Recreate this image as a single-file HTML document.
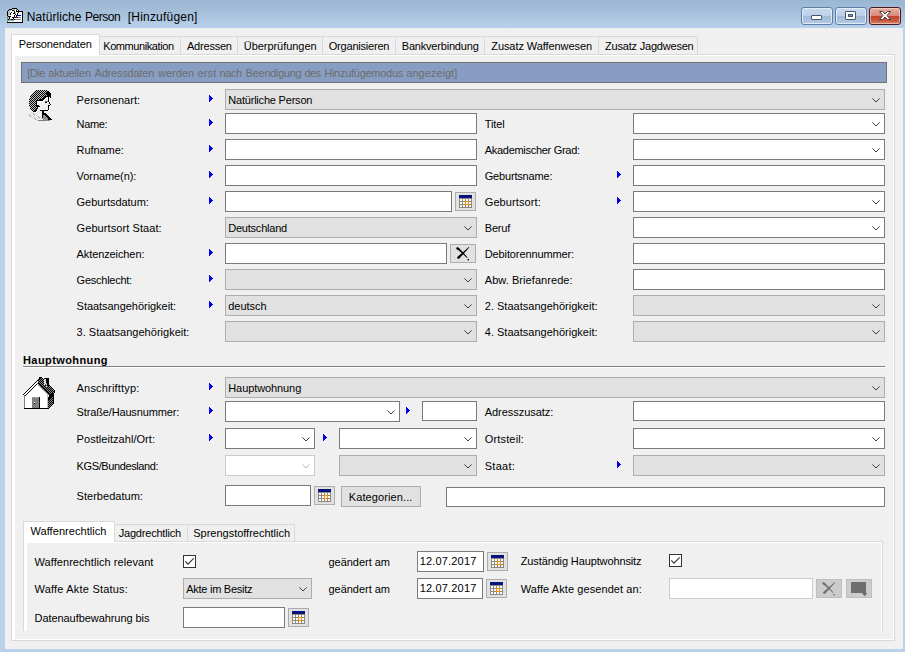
<!DOCTYPE html><html><head><meta charset="utf-8"><title>Natürliche Person [Hinzufügen]</title><style>
html,body{margin:0;padding:0;}
body{width:905px;height:652px;overflow:hidden;position:relative;background:#b9d1ea;font-family:"Liberation Sans",sans-serif;font-size:11px;color:#000;}
div,span,svg{position:absolute;box-sizing:border-box;}
.t{white-space:pre;line-height:13px;height:13px;}
.in{background:#fff;border:1px solid #7a7a7a;}
.cb{background:#fff;border:1px solid #7a7a7a;}
.cbd{background:#e1e1e1;border:1px solid #adadad;}
.cbx{background:#fff;border:1px solid #cccccc;}
.btn{background:#e1e1e1;border:1px solid #adadad;}
.btnd{background:#cccccc;border:1px solid #bfbfbf;}
.tab{background:#f0f0f0;border:1px solid #d9d9d9;border-bottom:none;}
.tabsel{background:#fff;border:1px solid #d9d9d9;border-bottom:none;}
</style></head><body>
<div style="left:0;top:0;width:905px;height:30px;background:linear-gradient(to bottom,#9ab5d2 0px,#a8c1dc 14px,#b8d0e9 27px,#b9d1ea 28px);"></div>
<div style="left:0;top:28px;width:905px;height:624px;background:#b9d1ea;"></div>
<div style="left:5px;top:28px;width:898px;height:621px;background:#f0f0f0;"></div>
<svg style="left:7px;top:8px" width="16" height="16" viewBox="0 0 16 16" shape-rendering="crispEdges"><path fill="#000000" d="M5 0h5v1h-5zM2 1h3v1h-3zM10 1h1v1h-1zM1 2h1v1h-1zM5 2h2v1h-2zM9 2h1v1h-1zM11 2h1v1h-1zM0 3h1v1h-1zM7 3h1v1h-1zM9 3h7v1h-7zM0 4h1v1h-1zM4 4h1v1h-1zM7 4h1v1h-1zM11 4h1v1h-1zM15 4h1v1h-1zM0 5h1v1h-1zM3 5h1v1h-1zM6 5h2v1h-2zM10 5h1v1h-1zM15 5h1v1h-1zM0 6h1v1h-1zM3 6h1v1h-1zM8 6h1v1h-1zM10 6h1v1h-1zM15 6h1v1h-1zM0 7h1v1h-1zM7 7h1v1h-1zM9 7h1v1h-1zM15 7h1v1h-1zM1 8h3v1h-3zM7 8h1v1h-1zM9 8h1v1h-1zM15 8h1v1h-1zM2 9h1v1h-1zM5 9h2v1h-2zM8 9h1v1h-1zM10 9h1v1h-1zM15 9h1v1h-1zM2 10h1v1h-1zM6 10h1v1h-1zM15 10h1v1h-1zM1 11h1v1h-1zM4 11h2v1h-2zM7 11h1v1h-1zM15 11h1v1h-1zM15 12h1v1h-1zM15 13h1v1h-1zM0 14h16v1h-16z"/><path fill="#c0c0c0" d="M5 1h3v1h-3zM9 1h1v1h-1zM2 2h2v1h-2zM7 2h1v1h-1zM1 3h2v1h-2zM1 4h2v1h-2zM8 4h1v1h-1zM1 5h2v1h-2zM8 5h1v1h-1zM1 6h2v1h-2zM1 7h1v1h-1zM1 9h1v1h-1zM1 10h1v1h-1z"/><path fill="#ffffff" d="M8 1h1v1h-1zM4 2h1v1h-1zM8 2h1v1h-1zM10 2h1v1h-1zM3 3h4v1h-4zM8 3h1v1h-1zM3 4h1v1h-1zM5 4h2v1h-2zM9 4h2v1h-2zM12 4h3v1h-3zM4 5h2v1h-2zM9 5h1v1h-1zM11 5h4v1h-4zM4 6h4v1h-4zM9 6h1v1h-1zM11 6h4v1h-4zM2 7h5v1h-5zM8 7h1v1h-1zM14 7h1v1h-1zM4 8h3v1h-3zM8 8h1v1h-1zM10 8h5v1h-5zM3 9h2v1h-2zM14 9h1v1h-1zM3 10h3v1h-3zM7 10h8v1h-8zM14 11h1v1h-1zM7 12h8v1h-8zM1 13h14v1h-14z"/><path fill="#0000a0" d="M10 7h4v1h-4z"/><path fill="#808080" d="M0 8h1v1h-1zM0 9h1v1h-1zM11 9h3v1h-3zM0 10h1v1h-1zM0 11h1v1h-1zM8 11h6v1h-6zM0 12h1v1h-1zM0 13h1v1h-1z"/><path fill="#c000c0" d="M7 9h1v1h-1zM9 9h1v1h-1z"/><path fill="#00a0a0" d="M2 11h2v1h-2zM6 11h1v1h-1z"/><path fill="#a8a8a8" d="M1 12h6v1h-6z"/></svg>
<span class="t" style="left:26.75px;top:10px;letter-spacing:0.083px;font-size:12px;line-height:15px;height:15px;">Natürliche </span>
<span class="t" style="left:84.90px;top:10px;letter-spacing:-0.450px;font-size:12px;line-height:15px;height:15px;">Person  </span>
<span class="t" style="left:127.75px;top:10px;letter-spacing:0.205px;font-size:12px;line-height:15px;height:15px;">[Hinzufügen]</span>
<div style="left:801px;top:7px;width:32px;height:18px;border:1px solid #5d7ea6;border-radius:3px;background:linear-gradient(to bottom,#c6d9ee 0%,#bcd1e9 48%,#a2bbd8 50%,#a9c2de 80%,#b9d0ea 100%);box-shadow:inset 0 0 0 1px rgba(236,244,252,.75);"></div>
<div style="left:835px;top:7px;width:32px;height:18px;border:1px solid #5d7ea6;border-radius:3px;background:linear-gradient(to bottom,#c6d9ee 0%,#bcd1e9 48%,#a2bbd8 50%,#a9c2de 80%,#b9d0ea 100%);box-shadow:inset 0 0 0 1px rgba(236,244,252,.75);"></div>
<div style="left:869px;top:7px;width:32px;height:18px;border:1px solid #4e1820;border-radius:3px;background:linear-gradient(to bottom,#e7b0a5 0%,#d98879 48%,#c1432a 50%,#c85a41 80%,#d88a6e 100%);box-shadow:inset 0 0 0 1px rgba(255,225,215,.55);"></div>
<div style="left:811px;top:15px;width:11px;height:5px;background:#fff;border:1px solid #4a5568;border-radius:1px;"></div>
<div style="left:845px;top:11px;width:11px;height:9px;background:#fff;border:1px solid #4a5568;border-radius:1px;"></div>
<div style="left:848px;top:14px;width:5px;height:3px;background:#7b98bd;border:1px solid #4a5568;"></div>
<svg style="left:878px;top:10px" width="14" height="11" viewBox="0 0 14 11"><path d="M1.5 1.5 L4.5 1.5 L7 4 L9.5 1.5 L12.5 1.5 L9 5.5 L12.5 9.5 L9.5 9.5 L7 7 L4.5 9.5 L1.5 9.5 L5 5.5 Z" fill="#fff" stroke="#4a3a40" stroke-width="1" stroke-linejoin="round"/></svg>
<div style="left:11px;top:54px;width:884px;height:587px;background:#f0f0f0;border:1px solid #d9d9d9;box-shadow:inset 0 0 0 1px #fff,inset 3px 0 0 #fff;"></div>
<div class="tabsel" style="left:11px;top:34px;width:89px;height:21px;z-index:2;"></div>
<span class="t" style="left:18.75px;top:38px;letter-spacing:-0.125px;z-index:3;">Personendaten</span>
<div class="tab" style="left:99px;top:36px;width:82px;height:18px;"></div>
<span class="t" style="left:103.25px;top:40px;letter-spacing:-0.417px;">Kommunikation</span>
<div class="tab" style="left:180px;top:36px;width:58px;height:18px;"></div>
<span class="t" style="left:187.00px;top:40px;letter-spacing:-0.214px;">Adressen</span>
<div class="tab" style="left:237px;top:36px;width:86px;height:18px;"></div>
<span class="t" style="left:243.75px;top:40px;letter-spacing:-0.042px;">Überprüfungen</span>
<div class="tab" style="left:322px;top:36px;width:74px;height:18px;"></div>
<span class="t" style="left:328.75px;top:40px;letter-spacing:-0.205px;">Organisieren</span>
<div class="tab" style="left:395px;top:36px;width:90px;height:18px;"></div>
<span class="t" style="left:401.75px;top:40px;letter-spacing:-0.192px;">Bankverbindung</span>
<div class="tab" style="left:484px;top:36px;width:115px;height:18px;"></div>
<span class="t" style="left:491.25px;top:40px;letter-spacing:-0.074px;">Zusatz Waffenwesen</span>
<div class="tab" style="left:598px;top:36px;width:100px;height:18px;"></div>
<span class="t" style="left:605.00px;top:40px;letter-spacing:-0.200px;">Zusatz Jagdwesen</span>
<div style="left:21px;top:62px;width:866px;height:21px;background:#889dc2;border:1px solid #727272;"></div>
<span class="t" style="left:27.25px;top:67px;letter-spacing:-0.500px;color:#6d6d6d;">[Die </span>
<span class="t" style="left:48.25px;top:67px;letter-spacing:-0.156px;color:#6d6d6d;">aktuellen </span>
<span class="t" style="left:94.50px;top:67px;letter-spacing:-0.200px;color:#6d6d6d;">Adressdaten </span>
<span class="t" style="left:158.00px;top:67px;color:#6d6d6d;">werden </span>
<span class="t" style="left:197.50px;top:67px;letter-spacing:0.167px;color:#6d6d6d;">erst </span>
<span class="t" style="left:219.50px;top:67px;letter-spacing:-0.417px;color:#6d6d6d;">nach </span>
<span class="t" style="left:245.75px;top:67px;letter-spacing:-0.306px;color:#6d6d6d;">Beendigung </span>
<span class="t" style="left:304.50px;top:67px;letter-spacing:-0.600px;color:#6d6d6d;">des </span>
<span class="t" style="left:324.25px;top:67px;letter-spacing:-0.269px;color:#6d6d6d;">Hinzufügemodus </span>
<span class="t" style="left:406.25px;top:67px;letter-spacing:0.028px;color:#6d6d6d;">angezeigt]</span>
<svg style="left:23px;top:89px" width="32" height="32" viewBox="0 0 32 32" shape-rendering="crispEdges"><path fill="#000000" d="M13 1h1v1h-1zM15 1h1v1h-1zM17 1h1v1h-1zM19 1h1v1h-1zM21 1h1v1h-1zM23 1h1v1h-1zM12 2h1v1h-1zM14 2h1v1h-1zM16 2h1v1h-1zM18 2h1v1h-1zM20 2h1v1h-1zM22 2h1v1h-1zM24 2h2v1h-2zM11 3h1v1h-1zM13 3h1v1h-1zM15 3h1v1h-1zM17 3h1v1h-1zM19 3h1v1h-1zM21 3h1v1h-1zM23 3h4v1h-4zM10 4h1v1h-1zM12 4h1v1h-1zM14 4h1v1h-1zM16 4h1v1h-1zM18 4h1v1h-1zM20 4h1v1h-1zM22 4h6v1h-6zM9 5h1v1h-1zM11 5h1v1h-1zM13 5h1v1h-1zM15 5h1v1h-1zM17 5h1v1h-1zM19 5h1v1h-1zM21 5h1v1h-1zM23 5h5v1h-5zM8 6h1v1h-1zM10 6h1v1h-1zM12 6h1v1h-1zM14 6h1v1h-1zM16 6h1v1h-1zM18 6h1v1h-1zM20 6h1v1h-1zM22 6h1v1h-1zM24 6h4v1h-4zM7 7h1v1h-1zM9 7h1v1h-1zM11 7h1v1h-1zM13 7h1v1h-1zM15 7h1v1h-1zM17 7h1v1h-1zM19 7h1v1h-1zM21 7h7v1h-7zM8 8h1v1h-1zM10 8h1v1h-1zM12 8h1v1h-1zM14 8h1v1h-1zM16 8h1v1h-1zM18 8h1v1h-1zM20 8h3v1h-3zM25 8h1v1h-1zM27 8h1v1h-1zM7 9h1v1h-1zM9 9h1v1h-1zM11 9h1v1h-1zM13 9h1v1h-1zM15 9h1v1h-1zM17 9h1v1h-1zM19 9h3v1h-3zM25 9h1v1h-1zM6 10h1v1h-1zM8 10h1v1h-1zM10 10h1v1h-1zM12 10h1v1h-1zM14 10h1v1h-1zM16 10h5v1h-5zM25 10h1v1h-1zM7 11h1v1h-1zM9 11h1v1h-1zM11 11h1v1h-1zM13 11h7v1h-7zM25 11h1v1h-1zM6 12h1v1h-1zM8 12h1v1h-1zM10 12h1v1h-1zM12 12h2v1h-2zM25 12h1v1h-1zM7 13h1v1h-1zM9 13h1v1h-1zM11 13h1v1h-1zM13 13h1v1h-1zM22 13h2v1h-2zM26 13h1v1h-1zM6 14h1v1h-1zM8 14h1v1h-1zM10 14h1v1h-1zM12 14h2v1h-2zM26 14h1v1h-1zM7 15h1v1h-1zM9 15h1v1h-1zM11 15h1v1h-1zM13 15h1v1h-1zM27 15h1v1h-1zM6 16h1v1h-1zM8 16h1v1h-1zM10 16h1v1h-1zM12 16h4v1h-4zM25 16h2v1h-2zM7 17h1v1h-1zM9 17h1v1h-1zM11 17h1v1h-1zM13 17h4v1h-4zM25 17h1v1h-1zM8 18h1v1h-1zM10 18h1v1h-1zM12 18h1v1h-1zM14 18h1v1h-1zM25 18h1v1h-1zM7 19h1v1h-1zM9 19h1v1h-1zM11 19h1v1h-1zM13 19h2v1h-2zM25 19h1v1h-1zM8 20h1v1h-1zM10 20h1v1h-1zM12 20h2v1h-2zM25 20h1v1h-1zM9 21h1v1h-1zM11 21h3v1h-3zM17 21h8v1h-8zM10 22h3v1h-3zM19 22h2v1h-2zM19 23h2v1h-2zM19 24h4v1h-4zM19 25h5v1h-5zM19 26h1v1h-1zM22 26h3v1h-3zM19 27h1v1h-1zM23 27h3v1h-3zM19 28h1v1h-1zM24 28h3v1h-3zM25 29h3v1h-3zM25 30h4v1h-4z"/><path fill="#c0c0c0" d="M14 1h1v1h-1zM16 1h1v1h-1zM18 1h1v1h-1zM20 1h1v1h-1zM22 1h1v1h-1zM11 2h1v1h-1zM13 2h1v1h-1zM15 2h1v1h-1zM17 2h1v1h-1zM19 2h1v1h-1zM21 2h1v1h-1zM23 2h1v1h-1zM10 3h1v1h-1zM12 3h1v1h-1zM14 3h1v1h-1zM16 3h1v1h-1zM18 3h1v1h-1zM20 3h1v1h-1zM22 3h1v1h-1zM9 4h1v1h-1zM11 4h1v1h-1zM13 4h1v1h-1zM15 4h1v1h-1zM17 4h1v1h-1zM19 4h1v1h-1zM21 4h1v1h-1zM8 5h1v1h-1zM10 5h1v1h-1zM12 5h1v1h-1zM14 5h1v1h-1zM16 5h1v1h-1zM18 5h1v1h-1zM20 5h1v1h-1zM22 5h1v1h-1zM9 6h1v1h-1zM11 6h1v1h-1zM13 6h1v1h-1zM15 6h1v1h-1zM17 6h1v1h-1zM19 6h1v1h-1zM21 6h1v1h-1zM23 6h1v1h-1zM8 7h1v1h-1zM10 7h1v1h-1zM12 7h1v1h-1zM14 7h1v1h-1zM16 7h1v1h-1zM18 7h1v1h-1zM20 7h1v1h-1zM7 8h1v1h-1zM9 8h1v1h-1zM11 8h1v1h-1zM13 8h1v1h-1zM15 8h1v1h-1zM17 8h1v1h-1zM19 8h1v1h-1zM6 9h1v1h-1zM8 9h1v1h-1zM10 9h1v1h-1zM12 9h1v1h-1zM14 9h1v1h-1zM16 9h1v1h-1zM18 9h1v1h-1zM7 10h1v1h-1zM9 10h1v1h-1zM11 10h1v1h-1zM13 10h1v1h-1zM15 10h1v1h-1zM6 11h1v1h-1zM8 11h1v1h-1zM10 11h1v1h-1zM12 11h1v1h-1zM7 12h1v1h-1zM9 12h1v1h-1zM11 12h1v1h-1zM6 13h1v1h-1zM8 13h1v1h-1zM10 13h1v1h-1zM12 13h1v1h-1zM7 14h1v1h-1zM9 14h1v1h-1zM11 14h1v1h-1zM6 15h1v1h-1zM8 15h1v1h-1zM10 15h1v1h-1zM12 15h1v1h-1zM7 16h1v1h-1zM9 16h1v1h-1zM11 16h1v1h-1zM6 17h1v1h-1zM8 17h1v1h-1zM10 17h1v1h-1zM12 17h1v1h-1zM7 18h1v1h-1zM9 18h1v1h-1zM11 18h1v1h-1zM13 18h1v1h-1zM8 19h1v1h-1zM10 19h1v1h-1zM12 19h1v1h-1zM9 20h1v1h-1zM11 20h1v1h-1zM10 21h1v1h-1z"/><path fill="#ffffff" d="M23 8h2v1h-2zM26 8h1v1h-1zM22 9h3v1h-3zM26 9h1v1h-1zM21 10h2v1h-2zM26 10h1v1h-1zM20 11h2v1h-2zM26 11h1v1h-1zM14 12h6v1h-6zM26 12h1v1h-1zM14 13h2v1h-2zM14 14h1v1h-1zM14 15h1v1h-1zM27 16h1v1h-1zM26 17h2v1h-2zM15 18h2v1h-2zM26 18h1v1h-1zM15 19h1v1h-1zM26 19h1v1h-1zM14 20h1v1h-1zM26 20h1v1h-1zM8 24h1v1h-1zM7 25h1v1h-1zM9 25h1v1h-1zM8 26h1v1h-1zM10 26h1v1h-1zM12 26h1v1h-1zM9 27h1v1h-1zM11 27h1v1h-1zM13 27h1v1h-1zM10 28h1v1h-1zM12 28h1v1h-1zM14 28h1v1h-1zM13 29h1v1h-1zM15 29h1v1h-1zM17 29h1v1h-1zM14 30h1v1h-1zM16 30h1v1h-1z"/><path fill="#606060" d="M22 12h2v1h-2z"/><path fill="#808080" d="M24 12h1v1h-1zM20 26h1v1h-1zM21 27h1v1h-1zM20 28h1v1h-1zM22 28h1v1h-1zM21 29h1v1h-1zM23 29h1v1h-1zM20 30h1v1h-1zM22 30h1v1h-1zM24 30h1v1h-1zM15 31h9v1h-9zM25 31h1v1h-1z"/><path fill="#d0d0d0" d="M8 23h1v1h-1zM7 24h1v1h-1zM9 24h1v1h-1zM6 25h1v1h-1zM8 25h1v1h-1zM10 25h1v1h-1zM12 25h1v1h-1zM5 26h1v1h-1zM7 26h1v1h-1zM9 26h1v1h-1zM11 26h1v1h-1zM13 26h1v1h-1zM8 27h1v1h-1zM10 27h1v1h-1zM12 27h1v1h-1zM14 27h1v1h-1zM9 28h1v1h-1zM11 28h1v1h-1zM13 28h1v1h-1zM15 28h1v1h-1zM17 28h1v1h-1zM10 29h1v1h-1zM12 29h1v1h-1zM14 29h1v1h-1zM16 29h1v1h-1zM18 29h1v1h-1zM13 30h1v1h-1zM15 30h1v1h-1zM17 30h1v1h-1zM14 31h1v1h-1z"/><path fill="#a8a8a8" d="M10 24h1v1h-1zM11 25h1v1h-1zM6 26h1v1h-1zM7 27h1v1h-1zM15 27h1v1h-1zM16 28h1v1h-1zM11 29h1v1h-1zM19 29h1v1h-1zM12 30h1v1h-1z"/><path fill="#a0a0a0" d="M21 26h1v1h-1zM20 27h1v1h-1zM22 27h1v1h-1zM21 28h1v1h-1zM23 28h1v1h-1zM20 29h1v1h-1zM22 29h1v1h-1zM24 29h1v1h-1zM21 30h1v1h-1zM23 30h1v1h-1zM24 31h1v1h-1zM26 31h1v1h-1z"/></svg>
<svg style="left:23px;top:377px" width="32" height="32" viewBox="0 0 32 32" shape-rendering="crispEdges"><path fill="#000000" d="M16 0h3v1h-3zM16 1h2v1h-2zM19 1h1v1h-1zM21 1h5v1h-5zM15 2h2v1h-2zM18 2h1v1h-1zM20 2h1v1h-1zM23 2h3v1h-3zM14 3h2v1h-2zM17 3h1v1h-1zM19 3h1v1h-1zM23 3h3v1h-3zM13 4h1v1h-1zM16 4h1v1h-1zM18 4h1v1h-1zM20 4h1v1h-1zM23 4h3v1h-3zM12 5h1v1h-1zM15 5h1v1h-1zM17 5h1v1h-1zM19 5h1v1h-1zM23 5h3v1h-3zM11 6h1v1h-1zM15 6h2v1h-2zM18 6h1v1h-1zM20 6h1v1h-1zM24 6h2v1h-2zM10 7h1v1h-1zM13 7h1v1h-1zM16 7h2v1h-2zM19 7h1v1h-1zM24 7h2v1h-2zM9 8h1v1h-1zM12 8h1v1h-1zM17 8h2v1h-2zM20 8h1v1h-1zM22 8h1v1h-1zM24 8h3v1h-3zM8 9h1v1h-1zM11 9h1v1h-1zM18 9h2v1h-2zM21 9h1v1h-1zM25 9h1v1h-1zM27 9h1v1h-1zM7 10h1v1h-1zM10 10h1v1h-1zM19 10h2v1h-2zM22 10h1v1h-1zM24 10h1v1h-1zM26 10h1v1h-1zM28 10h1v1h-1zM6 11h1v1h-1zM9 11h1v1h-1zM20 11h2v1h-2zM23 11h1v1h-1zM25 11h1v1h-1zM27 11h1v1h-1zM29 11h1v1h-1zM5 12h1v1h-1zM8 12h1v1h-1zM21 12h2v1h-2zM24 12h1v1h-1zM26 12h1v1h-1zM28 12h1v1h-1zM30 12h1v1h-1zM4 13h1v1h-1zM7 13h1v1h-1zM22 13h2v1h-2zM25 13h1v1h-1zM27 13h1v1h-1zM29 13h1v1h-1zM31 13h1v1h-1zM3 14h1v1h-1zM6 14h1v1h-1zM23 14h2v1h-2zM26 14h1v1h-1zM28 14h1v1h-1zM30 14h2v1h-2zM2 15h1v1h-1zM5 15h1v1h-1zM24 15h2v1h-2zM27 15h1v1h-1zM29 15h1v1h-1zM31 15h1v1h-1zM1 16h1v1h-1zM4 16h1v1h-1zM25 16h2v1h-2zM28 16h3v1h-3zM0 17h1v1h-1zM3 17h1v1h-1zM26 17h5v1h-5zM2 18h1v1h-1zM26 18h5v1h-5zM26 19h5v1h-5zM16 20h1v1h-1zM25 20h4v1h-4zM30 20h1v1h-1zM16 21h1v1h-1zM25 21h3v1h-3zM29 21h2v1h-2zM16 22h1v1h-1zM25 22h2v1h-2zM28 22h1v1h-1zM30 22h1v1h-1zM16 23h1v1h-1zM25 23h1v1h-1zM27 23h1v1h-1zM29 23h2v1h-2zM16 24h1v1h-1zM26 24h1v1h-1zM28 24h1v1h-1zM30 24h1v1h-1zM16 25h1v1h-1zM25 25h1v1h-1zM27 25h1v1h-1zM29 25h2v1h-2zM11 26h1v1h-1zM16 26h1v1h-1zM26 26h1v1h-1zM28 26h1v1h-1zM30 26h1v1h-1zM16 27h1v1h-1zM25 27h1v1h-1zM27 27h1v1h-1zM29 27h1v1h-1zM16 28h1v1h-1zM26 28h1v1h-1zM28 28h1v1h-1zM16 29h1v1h-1zM25 29h1v1h-1zM27 29h1v1h-1zM16 30h1v1h-1zM26 30h1v1h-1zM1 31h25v1h-25z"/><path fill="#808080" d="M18 1h1v1h-1zM17 2h1v1h-1zM19 2h1v1h-1zM16 3h1v1h-1zM18 3h1v1h-1zM20 3h1v1h-1zM15 4h1v1h-1zM17 4h1v1h-1zM19 4h1v1h-1zM16 5h1v1h-1zM18 5h1v1h-1zM20 5h1v1h-1zM14 6h1v1h-1zM17 6h1v1h-1zM19 6h1v1h-1zM23 6h1v1h-1zM15 7h1v1h-1zM18 7h1v1h-1zM20 7h1v1h-1zM22 7h1v1h-1zM16 8h1v1h-1zM19 8h1v1h-1zM21 8h1v1h-1zM23 8h1v1h-1zM17 9h1v1h-1zM20 9h1v1h-1zM22 9h1v1h-1zM24 9h1v1h-1zM26 9h1v1h-1zM18 10h1v1h-1zM21 10h1v1h-1zM23 10h1v1h-1zM25 10h1v1h-1zM27 10h1v1h-1zM19 11h1v1h-1zM22 11h1v1h-1zM24 11h1v1h-1zM26 11h1v1h-1zM28 11h1v1h-1zM20 12h1v1h-1zM23 12h1v1h-1zM25 12h1v1h-1zM27 12h1v1h-1zM29 12h1v1h-1zM21 13h1v1h-1zM24 13h1v1h-1zM26 13h1v1h-1zM28 13h1v1h-1zM30 13h1v1h-1zM22 14h1v1h-1zM25 14h1v1h-1zM27 14h1v1h-1zM29 14h1v1h-1zM23 15h1v1h-1zM26 15h1v1h-1zM28 15h1v1h-1zM30 15h1v1h-1zM24 16h1v1h-1zM27 16h1v1h-1zM25 17h1v1h-1zM1 18h1v1h-1zM1 19h1v1h-1zM1 20h1v1h-1zM29 20h1v1h-1zM1 21h1v1h-1zM9 21h7v1h-7zM28 21h1v1h-1zM1 22h1v1h-1zM9 22h7v1h-7zM27 22h1v1h-1zM29 22h1v1h-1zM1 23h1v1h-1zM9 23h7v1h-7zM26 23h1v1h-1zM28 23h1v1h-1zM1 24h1v1h-1zM9 24h7v1h-7zM25 24h1v1h-1zM27 24h1v1h-1zM29 24h1v1h-1zM1 25h1v1h-1zM9 25h2v1h-2zM12 25h4v1h-4zM26 25h1v1h-1zM28 25h1v1h-1zM1 26h1v1h-1zM9 26h2v1h-2zM12 26h4v1h-4zM25 26h1v1h-1zM27 26h1v1h-1zM29 26h1v1h-1zM1 27h1v1h-1zM9 27h7v1h-7zM26 27h1v1h-1zM28 27h1v1h-1zM1 28h1v1h-1zM9 28h7v1h-7zM25 28h1v1h-1zM27 28h1v1h-1zM1 29h1v1h-1zM9 29h7v1h-7zM26 29h1v1h-1zM1 30h1v1h-1zM9 30h7v1h-7zM25 30h1v1h-1z"/><path fill="#c0c0c0" d="M21 2h1v1h-1zM22 3h1v1h-1zM21 4h1v1h-1zM22 5h1v1h-1zM21 6h1v1h-1zM23 7h1v1h-1zM15 8h1v1h-1zM16 9h1v1h-1zM23 9h1v1h-1zM17 10h1v1h-1zM18 11h1v1h-1zM19 12h1v1h-1zM20 13h1v1h-1zM21 14h1v1h-1zM22 15h1v1h-1zM23 16h1v1h-1zM24 17h1v1h-1zM24 18h1v1h-1zM24 19h1v1h-1zM24 20h1v1h-1zM24 21h1v1h-1zM24 22h1v1h-1zM24 23h1v1h-1zM24 24h1v1h-1zM24 25h1v1h-1zM24 26h1v1h-1zM24 27h1v1h-1zM24 28h1v1h-1zM24 29h1v1h-1zM24 30h1v1h-1z"/><path fill="#ffffff" d="M22 2h1v1h-1zM21 3h1v1h-1zM14 4h1v1h-1zM22 4h1v1h-1zM13 5h2v1h-2zM21 5h1v1h-1zM12 6h2v1h-2zM22 6h1v1h-1zM11 7h2v1h-2zM14 7h1v1h-1zM21 7h1v1h-1zM10 8h2v1h-2zM13 8h2v1h-2zM9 9h2v1h-2zM12 9h4v1h-4zM8 10h2v1h-2zM11 10h6v1h-6zM7 11h2v1h-2zM10 11h8v1h-8zM6 12h2v1h-2zM9 12h10v1h-10zM5 13h2v1h-2zM8 13h12v1h-12zM4 14h2v1h-2zM7 14h14v1h-14zM3 15h2v1h-2zM6 15h16v1h-16zM2 16h2v1h-2zM5 16h18v1h-18zM1 17h2v1h-2zM4 17h20v1h-20zM3 18h21v1h-21zM2 19h22v1h-22zM2 20h7v1h-7zM17 20h7v1h-7zM2 21h7v1h-7zM17 21h7v1h-7zM2 22h7v1h-7zM17 22h7v1h-7zM2 23h7v1h-7zM17 23h7v1h-7zM2 24h7v1h-7zM17 24h7v1h-7zM2 25h7v1h-7zM11 25h1v1h-1zM17 25h7v1h-7zM2 26h7v1h-7zM17 26h7v1h-7zM2 27h7v1h-7zM17 27h7v1h-7zM2 28h7v1h-7zM17 28h7v1h-7zM2 29h7v1h-7zM17 29h7v1h-7zM2 30h7v1h-7zM17 30h7v1h-7z"/><path fill="#a0a0a0" d="M9 20h7v1h-7z"/></svg>
<span class="t" style="left:76.60px;top:94px;letter-spacing:0.045px;">Personenart:</span>
<svg style="left:209px;top:95px" width="4" height="7" viewBox="0 0 4 7" shape-rendering="crispEdges"><path d="M0 0h1v1h1v1h1v1h1v1h-1v1h-1v1h-1v1h-1z" fill="#0000ee"/></svg>
<span class="t" style="left:76.60px;top:118px;letter-spacing:-0.375px;">Name:</span>
<svg style="left:209px;top:119px" width="4" height="7" viewBox="0 0 4 7" shape-rendering="crispEdges"><path d="M0 0h1v1h1v1h1v1h1v1h-1v1h-1v1h-1v1h-1z" fill="#0000ee"/></svg>
<span class="t" style="left:76.60px;top:144px;letter-spacing:-0.071px;">Rufname:</span>
<svg style="left:209px;top:145px" width="4" height="7" viewBox="0 0 4 7" shape-rendering="crispEdges"><path d="M0 0h1v1h1v1h1v1h1v1h-1v1h-1v1h-1v1h-1z" fill="#0000ee"/></svg>
<span class="t" style="left:76.60px;top:170px;letter-spacing:-0.075px;">Vorname(n):</span>
<svg style="left:209px;top:171px" width="4" height="7" viewBox="0 0 4 7" shape-rendering="crispEdges"><path d="M0 0h1v1h1v1h1v1h1v1h-1v1h-1v1h-1v1h-1z" fill="#0000ee"/></svg>
<span class="t" style="left:76.60px;top:196px;letter-spacing:-0.042px;">Geburtsdatum:</span>
<svg style="left:209px;top:197px" width="4" height="7" viewBox="0 0 4 7" shape-rendering="crispEdges"><path d="M0 0h1v1h1v1h1v1h1v1h-1v1h-1v1h-1v1h-1z" fill="#0000ee"/></svg>
<span class="t" style="left:76.60px;top:222px;letter-spacing:0.078px;">Geburtsort Staat:</span>
<span class="t" style="left:76.60px;top:248px;letter-spacing:-0.104px;">Aktenzeichen:</span>
<svg style="left:209px;top:249px" width="4" height="7" viewBox="0 0 4 7" shape-rendering="crispEdges"><path d="M0 0h1v1h1v1h1v1h1v1h-1v1h-1v1h-1v1h-1z" fill="#0000ee"/></svg>
<span class="t" style="left:76.60px;top:274px;letter-spacing:-0.250px;">Geschlecht:</span>
<svg style="left:209px;top:275px" width="4" height="7" viewBox="0 0 4 7" shape-rendering="crispEdges"><path d="M0 0h1v1h1v1h1v1h1v1h-1v1h-1v1h-1v1h-1z" fill="#0000ee"/></svg>
<span class="t" style="left:76.60px;top:300px;letter-spacing:-0.039px;">Staatsangehörigkeit:</span>
<svg style="left:209px;top:301px" width="4" height="7" viewBox="0 0 4 7" shape-rendering="crispEdges"><path d="M0 0h1v1h1v1h1v1h1v1h-1v1h-1v1h-1v1h-1z" fill="#0000ee"/></svg>
<span class="t" style="left:76.60px;top:326px;letter-spacing:0.011px;">3. Staatsangehörigkeit:</span>
<span class="t" style="left:484.75px;top:118px;letter-spacing:-0.125px;">Titel</span>
<span class="t" style="left:484.75px;top:144px;letter-spacing:-0.294px;">Akademischer Grad:</span>
<span class="t" style="left:484.75px;top:170px;letter-spacing:-0.182px;">Geburtsname:</span>
<svg style="left:617px;top:171px" width="4" height="7" viewBox="0 0 4 7" shape-rendering="crispEdges"><path d="M0 0h1v1h1v1h1v1h1v1h-1v1h-1v1h-1v1h-1z" fill="#0000ee"/></svg>
<span class="t" style="left:484.75px;top:196px;letter-spacing:0.100px;">Geburtsort:</span>
<svg style="left:617px;top:197px" width="4" height="7" viewBox="0 0 4 7" shape-rendering="crispEdges"><path d="M0 0h1v1h1v1h1v1h1v1h-1v1h-1v1h-1v1h-1z" fill="#0000ee"/></svg>
<span class="t" style="left:484.75px;top:222px;letter-spacing:-0.188px;">Beruf</span>
<span class="t" style="left:484.75px;top:248px;letter-spacing:-0.117px;">Debitorennummer:</span>
<span class="t" style="left:484.75px;top:274px;letter-spacing:0.062px;">Abw. Briefanrede:</span>
<span class="t" style="left:484.75px;top:300px;letter-spacing:0.011px;">2. Staatsangehörigkeit:</span>
<span class="t" style="left:484.75px;top:326px;letter-spacing:0.011px;">4. Staatsangehörigkeit:</span>
<div class="cbd" style="left:225px;top:89px;width:660px;height:21px;"></div>
<svg style="left:871px;top:96.5px" width="10" height="7" viewBox="0 0 10 7"><path d="M1.4 1.4 L5 5 L8.6 1.4" fill="none" stroke="#404040" stroke-width="1"/></svg>
<span class="t" style="left:228.25px;top:94px;letter-spacing:-0.203px;">Natürliche Person</span>
<div class="in" style="left:225px;top:113px;width:252px;height:21px;"></div>
<div class="cb" style="left:633px;top:113px;width:252px;height:21px;"></div>
<svg style="left:871px;top:120.5px" width="10" height="7" viewBox="0 0 10 7"><path d="M1.4 1.4 L5 5 L8.6 1.4" fill="none" stroke="#404040" stroke-width="1"/></svg>
<div class="in" style="left:225px;top:139px;width:252px;height:21px;"></div>
<div class="cb" style="left:633px;top:139px;width:252px;height:21px;"></div>
<svg style="left:871px;top:146.5px" width="10" height="7" viewBox="0 0 10 7"><path d="M1.4 1.4 L5 5 L8.6 1.4" fill="none" stroke="#404040" stroke-width="1"/></svg>
<div class="in" style="left:225px;top:165px;width:252px;height:21px;"></div>
<div class="in" style="left:633px;top:165px;width:252px;height:21px;"></div>
<div class="in" style="left:225px;top:191px;width:227px;height:21px;"></div>
<div class="btn" style="left:455px;top:192px;width:21px;height:19px;"></div>
<svg style="left:459px;top:195px" width="13" height="13" viewBox="0 0 13 13" shape-rendering="crispEdges"><rect width="13" height="13" fill="#8d8a7b"/><rect width="13" height="3" fill="#06157d"/><g fill="#fff"><rect x="1" y="4" width="2" height="2"/><rect x="4" y="4" width="2" height="2"/><rect x="7" y="4" width="2" height="2"/><rect x="10" y="4" width="2" height="2"/><rect x="1" y="7" width="2" height="2"/><rect x="4" y="7" width="2" height="2"/><rect x="10" y="7" width="2" height="2"/><rect x="1" y="10" width="2" height="2"/><rect x="4" y="10" width="2" height="2"/><rect x="7" y="10" width="2" height="2"/><rect x="10" y="10" width="2" height="2"/></g><rect x="6" y="6" width="4" height="4" fill="#ff8c00"/><rect x="7" y="7" width="2" height="2" fill="#fff"/></svg>
<div class="cb" style="left:633px;top:191px;width:252px;height:21px;"></div>
<svg style="left:871px;top:198.5px" width="10" height="7" viewBox="0 0 10 7"><path d="M1.4 1.4 L5 5 L8.6 1.4" fill="none" stroke="#404040" stroke-width="1"/></svg>
<div class="cbd" style="left:225px;top:217px;width:252px;height:21px;"></div>
<svg style="left:463px;top:224.5px" width="10" height="7" viewBox="0 0 10 7"><path d="M1.4 1.4 L5 5 L8.6 1.4" fill="none" stroke="#404040" stroke-width="1"/></svg>
<span class="t" style="left:228.25px;top:222px;letter-spacing:-0.225px;">Deutschland</span>
<div class="cb" style="left:633px;top:217px;width:252px;height:21px;"></div>
<svg style="left:871px;top:224.5px" width="10" height="7" viewBox="0 0 10 7"><path d="M1.4 1.4 L5 5 L8.6 1.4" fill="none" stroke="#404040" stroke-width="1"/></svg>
<div class="in" style="left:225px;top:243px;width:222px;height:21px;"></div>
<div class="btn" style="left:450px;top:244px;width:26px;height:19px;"></div>
<svg style="left:456px;top:247px" width="14" height="14" viewBox="0 0 14 14"><path d="M0.2 1 L1.3 0.1 L3 0.9 L7.2 5.4 L11.5 10.4 L11 10.9 L6.5 6.8 L2.2 2.9 L0.5 2.2 Z" fill="#000"/><path d="M12.8 0.1 L13.3 0.6 L8 6.3 L3.6 11.2 L2.3 12 L1 11 L1.3 9.9 L6.6 5.4 Z" fill="#000"/><rect x="11.6" y="12" width="1.4" height="1.4" fill="#000"/></svg>
<div class="in" style="left:633px;top:243px;width:252px;height:21px;"></div>
<div class="cbd" style="left:225px;top:269px;width:252px;height:21px;"></div>
<svg style="left:463px;top:276.5px" width="10" height="7" viewBox="0 0 10 7"><path d="M1.4 1.4 L5 5 L8.6 1.4" fill="none" stroke="#404040" stroke-width="1"/></svg>
<div class="in" style="left:633px;top:269px;width:252px;height:21px;"></div>
<div class="cbd" style="left:225px;top:295px;width:252px;height:21px;"></div>
<svg style="left:463px;top:302.5px" width="10" height="7" viewBox="0 0 10 7"><path d="M1.4 1.4 L5 5 L8.6 1.4" fill="none" stroke="#404040" stroke-width="1"/></svg>
<span class="t" style="left:228.25px;top:300px;letter-spacing:-0.042px;">deutsch</span>
<div class="cbd" style="left:633px;top:295px;width:252px;height:21px;"></div>
<svg style="left:871px;top:302.5px" width="10" height="7" viewBox="0 0 10 7"><path d="M1.4 1.4 L5 5 L8.6 1.4" fill="none" stroke="#404040" stroke-width="1"/></svg>
<div class="cbd" style="left:225px;top:321px;width:252px;height:21px;"></div>
<svg style="left:463px;top:328.5px" width="10" height="7" viewBox="0 0 10 7"><path d="M1.4 1.4 L5 5 L8.6 1.4" fill="none" stroke="#404040" stroke-width="1"/></svg>
<div class="cbd" style="left:633px;top:321px;width:252px;height:21px;"></div>
<svg style="left:871px;top:328.5px" width="10" height="7" viewBox="0 0 10 7"><path d="M1.4 1.4 L5 5 L8.6 1.4" fill="none" stroke="#404040" stroke-width="1"/></svg>
<span class="t" style="left:23.00px;top:354px;letter-spacing:0.409px;font-weight:bold;">Hauptwohnung</span>
<div style="left:23px;top:366px;width:862px;height:1px;background:#808080;"></div>
<div style="left:23px;top:367px;width:862px;height:1px;background:#ffffff;"></div>
<span class="t" style="left:76.60px;top:382px;letter-spacing:0.188px;">Anschrifttyp:</span>
<svg style="left:209px;top:383px" width="4" height="7" viewBox="0 0 4 7" shape-rendering="crispEdges"><path d="M0 0h1v1h1v1h1v1h1v1h-1v1h-1v1h-1v1h-1z" fill="#0000ee"/></svg>
<span class="t" style="left:76.60px;top:406px;letter-spacing:-0.147px;">Straße/Hausnummer:</span>
<svg style="left:209px;top:407px" width="4" height="7" viewBox="0 0 4 7" shape-rendering="crispEdges"><path d="M0 0h1v1h1v1h1v1h1v1h-1v1h-1v1h-1v1h-1z" fill="#0000ee"/></svg>
<span class="t" style="left:76.60px;top:433px;letter-spacing:0.047px;">Postleitzahl/Ort:</span>
<svg style="left:209px;top:434px" width="4" height="7" viewBox="0 0 4 7" shape-rendering="crispEdges"><path d="M0 0h1v1h1v1h1v1h1v1h-1v1h-1v1h-1v1h-1z" fill="#0000ee"/></svg>
<span class="t" style="left:76.60px;top:460px;letter-spacing:-0.393px;">KGS/Bundesland:</span>
<span class="t" style="left:76.60px;top:490px;letter-spacing:0.023px;">Sterbedatum:</span>
<div class="cbd" style="left:225px;top:377px;width:660px;height:21px;"></div>
<svg style="left:871px;top:384.5px" width="10" height="7" viewBox="0 0 10 7"><path d="M1.4 1.4 L5 5 L8.6 1.4" fill="none" stroke="#404040" stroke-width="1"/></svg>
<span class="t" style="left:228.25px;top:382px;letter-spacing:-0.091px;">Hauptwohnung</span>
<div class="cb" style="left:225px;top:401px;width:175px;height:21px;"></div>
<svg style="left:386px;top:408.5px" width="10" height="7" viewBox="0 0 10 7"><path d="M1.4 1.4 L5 5 L8.6 1.4" fill="none" stroke="#404040" stroke-width="1"/></svg>
<svg style="left:406px;top:407px" width="4" height="7" viewBox="0 0 4 7" shape-rendering="crispEdges"><path d="M0 0h1v1h1v1h1v1h1v1h-1v1h-1v1h-1v1h-1z" fill="#0000ee"/></svg>
<div class="in" style="left:422px;top:401px;width:55px;height:20px;"></div>
<span class="t" style="left:484.75px;top:406px;letter-spacing:-0.042px;">Adresszusatz:</span>
<div class="in" style="left:633px;top:401px;width:252px;height:20px;"></div>
<div class="cb" style="left:225px;top:428px;width:90px;height:21px;"></div>
<svg style="left:301px;top:435.5px" width="10" height="7" viewBox="0 0 10 7"><path d="M1.4 1.4 L5 5 L8.6 1.4" fill="none" stroke="#404040" stroke-width="1"/></svg>
<svg style="left:323px;top:434px" width="4" height="7" viewBox="0 0 4 7" shape-rendering="crispEdges"><path d="M0 0h1v1h1v1h1v1h1v1h-1v1h-1v1h-1v1h-1z" fill="#0000ee"/></svg>
<div class="cb" style="left:339px;top:428px;width:138px;height:21px;"></div>
<svg style="left:463px;top:435.5px" width="10" height="7" viewBox="0 0 10 7"><path d="M1.4 1.4 L5 5 L8.6 1.4" fill="none" stroke="#404040" stroke-width="1"/></svg>
<span class="t" style="left:484.75px;top:433px;letter-spacing:0.156px;">Ortsteil:</span>
<div class="cb" style="left:633px;top:428px;width:252px;height:21px;"></div>
<svg style="left:871px;top:435.5px" width="10" height="7" viewBox="0 0 10 7"><path d="M1.4 1.4 L5 5 L8.6 1.4" fill="none" stroke="#404040" stroke-width="1"/></svg>
<div class="cbx" style="left:225px;top:455px;width:90px;height:21px;"></div>
<svg style="left:301px;top:462.5px" width="10" height="7" viewBox="0 0 10 7"><path d="M1.4 1.4 L5 5 L8.6 1.4" fill="none" stroke="#b8b8b8" stroke-width="1"/></svg>
<div class="cbd" style="left:339px;top:455px;width:138px;height:21px;"></div>
<svg style="left:463px;top:462.5px" width="10" height="7" viewBox="0 0 10 7"><path d="M1.4 1.4 L5 5 L8.6 1.4" fill="none" stroke="#404040" stroke-width="1"/></svg>
<span class="t" style="left:484.75px;top:460px;letter-spacing:0.250px;">Staat:</span>
<svg style="left:617px;top:461px" width="4" height="7" viewBox="0 0 4 7" shape-rendering="crispEdges"><path d="M0 0h1v1h1v1h1v1h1v1h-1v1h-1v1h-1v1h-1z" fill="#0000ee"/></svg>
<div class="cbd" style="left:633px;top:455px;width:252px;height:21px;"></div>
<svg style="left:871px;top:462.5px" width="10" height="7" viewBox="0 0 10 7"><path d="M1.4 1.4 L5 5 L8.6 1.4" fill="none" stroke="#404040" stroke-width="1"/></svg>
<div class="in" style="left:225px;top:485px;width:86px;height:21px;"></div>
<div class="btn" style="left:314px;top:486px;width:21px;height:19px;"></div>
<svg style="left:318px;top:489px" width="13" height="13" viewBox="0 0 13 13" shape-rendering="crispEdges"><rect width="13" height="13" fill="#8d8a7b"/><rect width="13" height="3" fill="#06157d"/><g fill="#fff"><rect x="1" y="4" width="2" height="2"/><rect x="4" y="4" width="2" height="2"/><rect x="7" y="4" width="2" height="2"/><rect x="10" y="4" width="2" height="2"/><rect x="1" y="7" width="2" height="2"/><rect x="4" y="7" width="2" height="2"/><rect x="10" y="7" width="2" height="2"/><rect x="1" y="10" width="2" height="2"/><rect x="4" y="10" width="2" height="2"/><rect x="7" y="10" width="2" height="2"/><rect x="10" y="10" width="2" height="2"/></g><rect x="6" y="6" width="4" height="4" fill="#ff8c00"/><rect x="7" y="7" width="2" height="2" fill="#fff"/></svg>
<div class="btn" style="left:341px;top:486px;width:80px;height:21px;"></div>
<span class="t" style="left:348.75px;top:491px;letter-spacing:0.104px;">Kategorien...</span>
<div class="in" style="left:446px;top:487px;width:439px;height:20px;"></div>
<div style="left:23px;top:541px;width:860px;height:90px;background:#f0f0f0;border:1px solid #d9d9d9;border-bottom:none;box-shadow:inset 3px 0 0 #fff,inset -1px 0 0 #fff,inset 0 1px 0 #fff;"></div>
<div class="tabsel" style="left:23px;top:521px;width:92px;height:21px;z-index:2;"></div>
<span class="t" style="left:30.50px;top:525px;letter-spacing:0.054px;z-index:3;">Waffenrechtlich</span>
<div class="tab" style="left:114px;top:524px;width:74px;height:17px;"></div>
<span class="t" style="left:118.75px;top:527px;letter-spacing:-0.208px;">Jagdrechtlich</span>
<div class="tab" style="left:187px;top:524px;width:108px;height:17px;"></div>
<span class="t" style="left:193.25px;top:527px;letter-spacing:-0.013px;">Sprengstoffrechtlich</span>
<span class="t" style="left:34.50px;top:556px;letter-spacing:0.065px;">Waffenrechtlich relevant</span>
<span class="t" style="left:34.50px;top:583px;letter-spacing:0.206px;">Waffe Akte Status:</span>
<span class="t" style="left:34.50px;top:612px;letter-spacing:-0.062px;">Datenaufbewahrung bis</span>
<div style="left:183px;top:555px;width:13px;height:13px;background:#fff;border:1px solid #333;"></div>
<svg style="left:183px;top:555px" width="13" height="13" viewBox="0 0 13 13"><path d="M2.3 6.3 L5 9.1 L10.7 3.3" fill="none" stroke="#333" stroke-width="1.1"/></svg>
<div class="cbd" style="left:183px;top:578px;width:129px;height:21px;"></div>
<svg style="left:298px;top:585.5px" width="10" height="7" viewBox="0 0 10 7"><path d="M1.4 1.4 L5 5 L8.6 1.4" fill="none" stroke="#404040" stroke-width="1"/></svg>
<span class="t" style="left:186.25px;top:583px;letter-spacing:-0.269px;">Akte im Besitz</span>
<div class="in" style="left:183px;top:607px;width:102px;height:21px;"></div>
<div class="btn" style="left:288px;top:608px;width:21px;height:19px;"></div>
<svg style="left:292px;top:611px" width="13" height="13" viewBox="0 0 13 13" shape-rendering="crispEdges"><rect width="13" height="13" fill="#8d8a7b"/><rect width="13" height="3" fill="#06157d"/><g fill="#fff"><rect x="1" y="4" width="2" height="2"/><rect x="4" y="4" width="2" height="2"/><rect x="7" y="4" width="2" height="2"/><rect x="10" y="4" width="2" height="2"/><rect x="1" y="7" width="2" height="2"/><rect x="4" y="7" width="2" height="2"/><rect x="10" y="7" width="2" height="2"/><rect x="1" y="10" width="2" height="2"/><rect x="4" y="10" width="2" height="2"/><rect x="7" y="10" width="2" height="2"/><rect x="10" y="10" width="2" height="2"/></g><rect x="6" y="6" width="4" height="4" fill="#ff8c00"/><rect x="7" y="7" width="2" height="2" fill="#fff"/></svg>
<span class="t" style="left:328.50px;top:556px;letter-spacing:-0.025px;">geändert am</span>
<span class="t" style="left:328.50px;top:583px;letter-spacing:-0.025px;">geändert am</span>
<div class="in" style="left:417px;top:551px;width:67px;height:21px;"></div>
<span class="t" style="left:419.75px;top:555px;letter-spacing:0.167px;">12.07.2017</span>
<div class="btn" style="left:487px;top:552px;width:21px;height:19px;"></div>
<svg style="left:491px;top:555px" width="13" height="13" viewBox="0 0 13 13" shape-rendering="crispEdges"><rect width="13" height="13" fill="#8d8a7b"/><rect width="13" height="3" fill="#06157d"/><g fill="#fff"><rect x="1" y="4" width="2" height="2"/><rect x="4" y="4" width="2" height="2"/><rect x="7" y="4" width="2" height="2"/><rect x="10" y="4" width="2" height="2"/><rect x="1" y="7" width="2" height="2"/><rect x="4" y="7" width="2" height="2"/><rect x="10" y="7" width="2" height="2"/><rect x="1" y="10" width="2" height="2"/><rect x="4" y="10" width="2" height="2"/><rect x="7" y="10" width="2" height="2"/><rect x="10" y="10" width="2" height="2"/></g><rect x="6" y="6" width="4" height="4" fill="#ff8c00"/><rect x="7" y="7" width="2" height="2" fill="#fff"/></svg>
<div class="in" style="left:417px;top:578px;width:66px;height:21px;"></div>
<span class="t" style="left:419.75px;top:582px;letter-spacing:0.167px;">12.07.2017</span>
<div class="btn" style="left:486px;top:579px;width:21px;height:19px;"></div>
<svg style="left:490px;top:582px" width="13" height="13" viewBox="0 0 13 13" shape-rendering="crispEdges"><rect width="13" height="13" fill="#8d8a7b"/><rect width="13" height="3" fill="#06157d"/><g fill="#fff"><rect x="1" y="4" width="2" height="2"/><rect x="4" y="4" width="2" height="2"/><rect x="7" y="4" width="2" height="2"/><rect x="10" y="4" width="2" height="2"/><rect x="1" y="7" width="2" height="2"/><rect x="4" y="7" width="2" height="2"/><rect x="10" y="7" width="2" height="2"/><rect x="1" y="10" width="2" height="2"/><rect x="4" y="10" width="2" height="2"/><rect x="7" y="10" width="2" height="2"/><rect x="10" y="10" width="2" height="2"/></g><rect x="6" y="6" width="4" height="4" fill="#ff8c00"/><rect x="7" y="7" width="2" height="2" fill="#fff"/></svg>
<span class="t" style="left:520.75px;top:555px;letter-spacing:-0.125px;">Zuständig Hauptwohnsitz</span>
<div style="left:669px;top:554px;width:13px;height:13px;background:#fff;border:1px solid #333;"></div>
<svg style="left:669px;top:554px" width="13" height="13" viewBox="0 0 13 13"><path d="M2.3 6.3 L5 9.1 L10.7 3.3" fill="none" stroke="#333" stroke-width="1.1"/></svg>
<span class="t" style="left:520.75px;top:583px;letter-spacing:0.080px;">Waffe Akte gesendet an:</span>
<div class="cbx" style="left:669px;top:578px;width:144px;height:21px;"></div>
<div class="btnd" style="left:816px;top:579px;width:26px;height:19px;"></div>
<svg style="left:822px;top:582px" width="14" height="14" viewBox="0 0 14 14"><path d="M0.2 1 L1.3 0.1 L3 0.9 L7.2 5.4 L11.5 10.4 L11 10.9 L6.5 6.8 L2.2 2.9 L0.5 2.2 Z" fill="#6d6d6d"/><path d="M12.8 0.1 L13.3 0.6 L8 6.3 L3.6 11.2 L2.3 12 L1 11 L1.3 9.9 L6.6 5.4 Z" fill="#6d6d6d"/><rect x="11.6" y="12" width="1.4" height="1.4" fill="#6d6d6d"/></svg>
<div class="btnd" style="left:846px;top:579px;width:26px;height:19px;"></div>
<svg style="left:851px;top:582px" width="17" height="15" viewBox="0 0 17 15"><path d="M0 0 H15 V11 H16.2 L13.6 14.2 L11 11 H0 Z" fill="#6d6d6d"/></svg>
</body></html>
